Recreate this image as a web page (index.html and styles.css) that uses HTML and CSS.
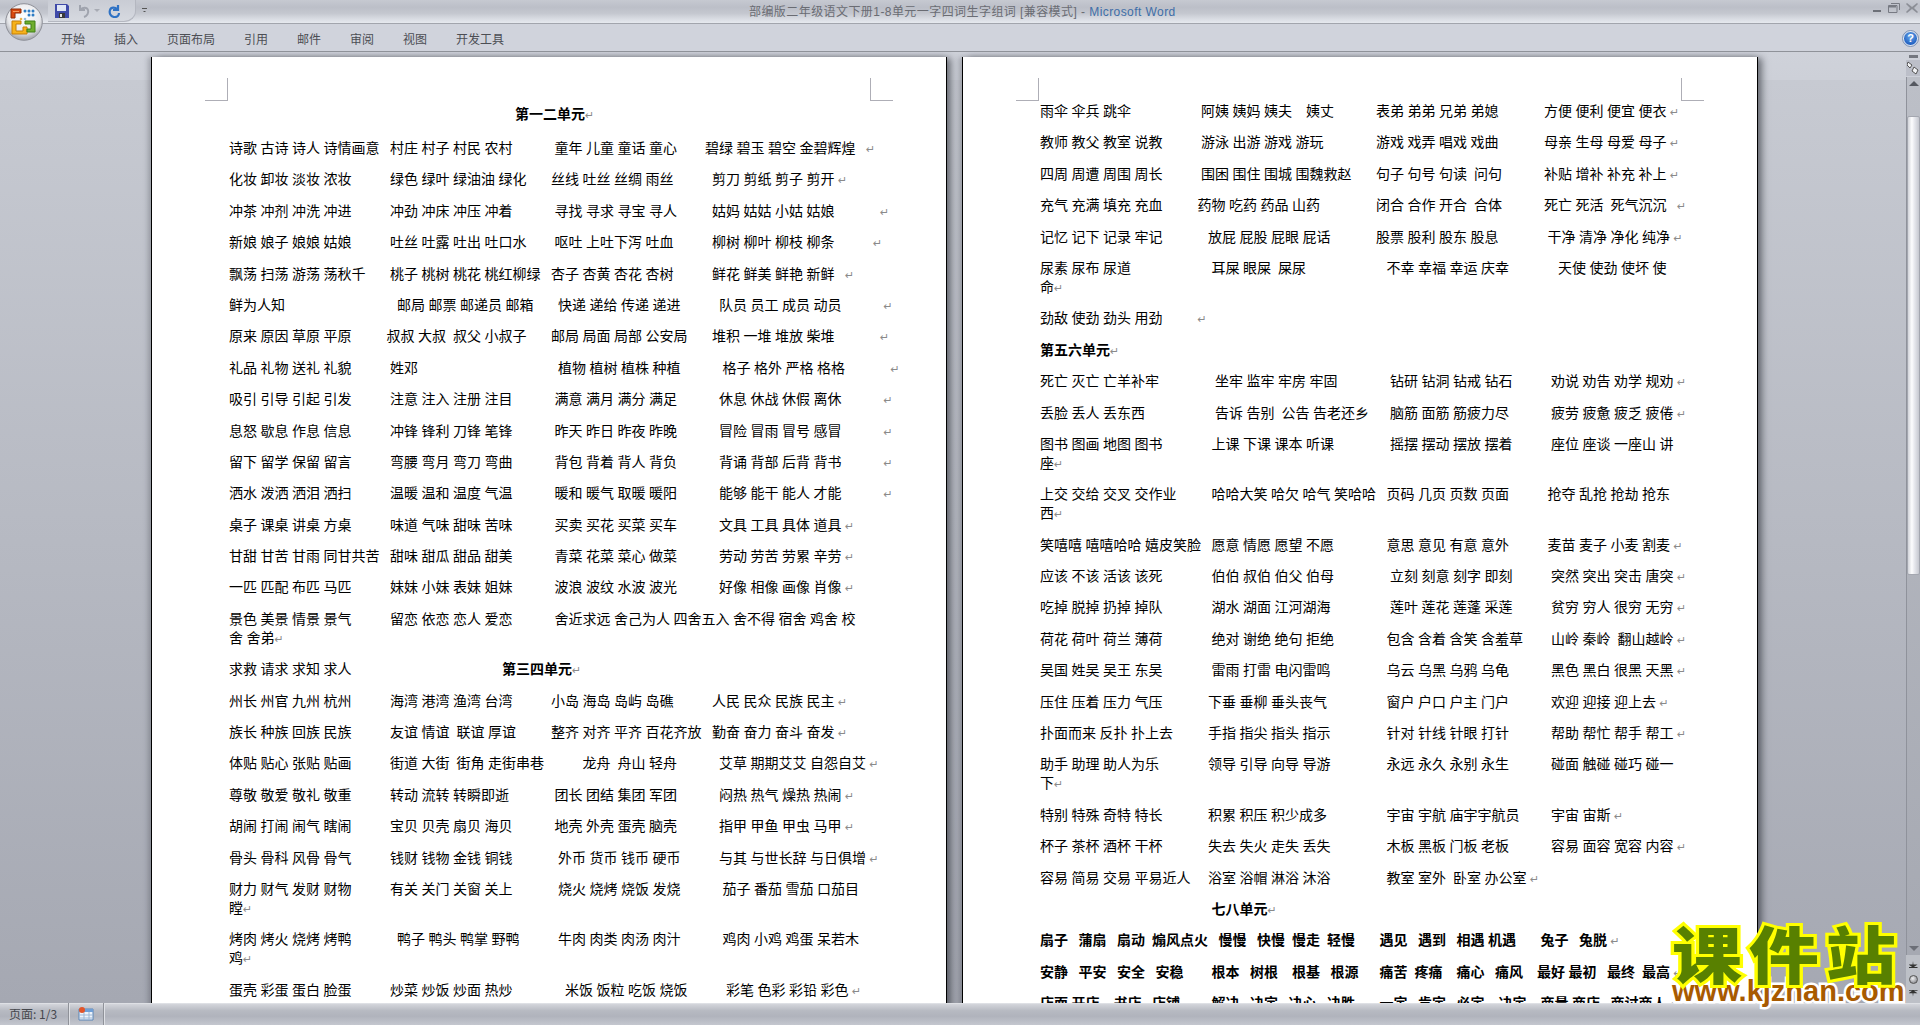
FILE: index.html
```html
<!DOCTYPE html>
<html lang="zh-CN">
<head>
<meta charset="utf-8">
<title>部编版二年级语文下册1-8单元一字四词生字组词 [兼容模式] - Microsoft Word</title>
<link rel="stylesheet" href="styles.css">
</head>
<body>
<div class="window">
  <div class="office-btn">
    <svg viewBox="0 0 38 38" width="38" height="38">
      <defs>
        <radialGradient id="orb" cx="50%" cy="35%" r="62%"><stop offset="0" stop-color="#ffffff"/><stop offset=".7" stop-color="#e8e9ec"/><stop offset="1" stop-color="#a9abb2"/></radialGradient>
      </defs>
      <circle cx="19" cy="19" r="18.3" fill="url(#orb)" stroke="#8e9098" stroke-width="1"/>
      <g transform="translate(-1 -2)">
        <path d="M7 8h10v4h-6v5H7z" fill="#d9480f" stroke="#8f2a05" stroke-width="1"/>
        <path d="M9 10h6v1H9z" fill="#f39a5e"/>
        <circle cx="21" cy="10" r="1.5" fill="#2d7cc4"/><circle cx="25" cy="10" r="1.5" fill="#2d7cc4"/><circle cx="29" cy="10" r="1.5" fill="#2d7cc4"/>
        <circle cx="25" cy="14" r="1.5" fill="#2d7cc4"/><circle cx="29" cy="14" r="1.5" fill="#2d7cc4"/>
        <circle cx="21" cy="18" r="1.3" fill="#8dbbe0"/><circle cx="17" cy="18" r="1.3" fill="#e9b44c"/>
        <path d="M8 20h9v3h-5v7h7v-4h4v7H8z" fill="#f6b21b" stroke="#c57f08" stroke-width="1"/>
        <path d="M21 20h10v11h-8v-3h4v-5h-6z" fill="#6fae2e" stroke="#3f7e14" stroke-width="1"/>
      </g>
    </svg>
  </div>

  <header class="titlebar">
    <div class="qat">
      <svg class="qat-ico" viewBox="0 0 14 14" width="14" height="14"><path d="M0 0h12l2 2v12H0z" fill="#3f4aa8"/><path d="M2 1h9v6H2z" fill="#dfe6f5"/><path d="M4 9h6v5H4z" fill="#3a3a3a"/><path d="M5 10h2v3H5z" fill="#e6e6e6"/></svg>
      <svg class="qat-ico undo" viewBox="0 0 14 14" width="14" height="14"><path d="M3 1v5h5M3.5 5.5C6 3 10 3 11 6s-1 6-4 7" fill="none" stroke="#a0a4ae" stroke-width="2"/></svg>
      <span class="qat-drop"></span>
      <svg class="qat-ico redo" viewBox="0 0 14 14" width="14" height="14"><path d="M11 1v5H6M10.5 5.5C8 3 4 3 3 6s.5 6.5 4 7 5-2 5-4" fill="none" stroke="#2f72c4" stroke-width="2.2"/></svg>
    </div>
    <span class="qat-more"></span>
    <div class="doc-title">部编版二年级语文下册1-8单元一字四词生字组词 [兼容模式] - <span class="app-name">Microsoft Word</span></div>
    <div class="win-ctrls">
      <svg viewBox="0 0 10 10" width="10" height="10"><path d="M1 7h8v2H1z" fill="#6d7078"/></svg>
      <svg viewBox="0 0 12 10" width="12" height="10"><path d="M3 .5h8.5V7M.5 2.5h8.5v7H.5z" fill="none" stroke="#777a83"/><path d="M1 3h7v1.5H1z" fill="#777a83"/></svg>
      <svg viewBox="0 0 12 10" width="12" height="10"><path d="M1 0l5 4 5-4 1 1-4 4 4 4-1 1-5-4-5 4-1-1 4-4-4-4z" fill="#8b8e96"/></svg>
    </div>
  </header>

  <nav class="ribbon">
    <span>开始</span><span>插入</span><span>页面布局</span><span>引用</span><span>邮件</span><span>审阅</span><span>视图</span><span>开发工具</span>
    <span class="help">?</span>
  </nav>

  <main class="workspace">
    <div class="doc">
      <article class="page">
        <i class="crop crop-l"></i><i class="crop crop-r"></i>
        <p class="ln title">第一二单元<span class="pm">↵</span></p>
        <p class="ln">诗歌 古诗 诗人 诗情画意   村庄 村子 村民 农村            童年 儿童 童话 童心        碧绿 碧玉 碧空 金碧辉煌   <span class="pm">↵</span></p>
        <p class="ln">化妆 卸妆 淡妆 浓妆           绿色 绿叶 绿油油 绿化       丝线 吐丝 丝绸 雨丝           剪刀 剪纸 剪子 剪开 <span class="pm">↵</span></p>
        <p class="ln">冲茶 冲剂 冲洗 冲进           冲劲 冲床 冲压 冲着            寻找 寻求 寻宝 寻人          姑妈 姑姑 小姑 姑娘             <span class="pm">↵</span></p>
        <p class="ln">新娘 娘子 娘娘 姑娘           吐丝 吐露 吐出 吐口水        呕吐 上吐下泻 吐血           柳树 柳叶 柳枝 柳条           <span class="pm">↵</span></p>
        <p class="ln">飘荡 扫荡 游荡 荡秋千       桃子 桃树 桃花 桃红柳绿   杏子 杏黄 杏花 杏树           鲜花 鲜美 鲜艳 新鲜   <span class="pm">↵</span></p>
        <p class="ln">鲜为人知                                邮局 邮票 邮递员 邮箱       快递 递给 传递 递进           队员 员工 成员 动员            <span class="pm">↵</span></p>
        <p class="ln">原来 原因 草原 平原          叔叔 大叔  叔父 小叔子       邮局 局面 局部 公安局       堆积 一堆 堆放 柴堆             <span class="pm">↵</span></p>
        <p class="ln">礼品 礼物 送礼 礼貌           姓邓                                        植物 植树 植株 种植            格子 格外 严格 格格             <span class="pm">↵</span></p>
        <p class="ln">吸引 引导 引起 引发           注意 注入 注册 注目            满意 满月 满分 满足            休息 休战 休假 离休            <span class="pm">↵</span></p>
        <p class="ln">息怒 歇息 作息 信息           冲锋 锋利 刀锋 笔锋            昨天 昨日 昨夜 昨晚            冒险 冒雨 冒号 感冒            <span class="pm">↵</span></p>
        <p class="ln">留下 留学 保留 留言           弯腰 弯月 弯刀 弯曲            背包 背着 背人 背负            背诵 背部 后背 背书            <span class="pm">↵</span></p>
        <p class="ln">洒水 泼洒 洒泪 洒扫           温暖 温和 温度 气温            暖和 暖气 取暖 暖阳            能够 能干 能人 才能            <span class="pm">↵</span></p>
        <p class="ln">桌子 课桌 讲桌 方桌           味道 气味 甜味 苦味            买卖 买花 买菜 买车            文具 工具 具体 道具 <span class="pm">↵</span></p>
        <p class="ln">甘甜 甘苦 甘雨 同甘共苦   甜味 甜瓜 甜品 甜美            青菜 花菜 菜心 做菜            劳动 劳苦 劳累 辛劳 <span class="pm">↵</span></p>
        <p class="ln">一匹 匹配 布匹 马匹           妹妹 小妹 表妹 姐妹            波浪 波纹 水波 波光            好像 相像 画像 肖像 <span class="pm">↵</span></p>
        <p class="ln">景色 美景 情景 景气           留恋 依恋 恋人 爱恋            舍近求远 舍己为人 四舍五入 舍不得 宿舍 鸡舍 校<br>舍 舍弟<span class="pm">↵</span></p>
        <p class="ln">求救 请求 求知 求人                                           <b>第三四单元</b><span class="pm">↵</span></p>
        <p class="ln">州长 州官 九州 杭州           海湾 港湾 渔湾 台湾           小岛 海岛 岛屿 岛礁           人民 民众 民族 民主 <span class="pm">↵</span></p>
        <p class="ln">族长 种族 回族 民族           友谊 情谊  联谊 厚谊          整齐 对齐 平齐 百花齐放   勤奋 奋力 奋斗 奋发 <span class="pm">↵</span></p>
        <p class="ln">体贴 贴心 张贴 贴画           街道 大街  街角 走街串巷           龙舟  舟山 轻舟            艾草 期期艾艾 自怨自艾 <span class="pm">↵</span></p>
        <p class="ln">尊敬 敬爱 敬礼 敬重           转动 流转 转瞬即逝             团长 团结 集团 军团            闷热 热气 燥热 热闹 <span class="pm">↵</span></p>
        <p class="ln">胡闹 打闹 闹气 瞎闹           宝贝 贝壳 扇贝 海贝            地壳 外壳 蛋壳 脑壳            指甲 甲鱼 甲虫 马甲 <span class="pm">↵</span></p>
        <p class="ln">骨头 骨科 风骨 骨气           钱财 钱物 金钱 铜钱             外币 货币 钱币 硬币           与其 与世长辞 与日俱增 <span class="pm">↵</span></p>
        <p class="ln">财力 财气 发财 财物           有关 关门 关窗 关上             烧火 烧烤 烧饭 发烧            茄子 番茄 雪茄 口茄目<br>瞠<span class="pm">↵</span></p>
        <p class="ln">烤肉 烤火 烧烤 烤鸭             鸭子 鸭头 鸭掌 野鸭           牛肉 肉类 肉汤 肉汁            鸡肉 小鸡 鸡蛋 呆若木<br>鸡<span class="pm">↵</span></p>
        <p class="ln">蛋壳 彩蛋 蛋白 脸蛋           炒菜 炒饭 炒面 热炒               米饭 饭粒 吃饭 烧饭           彩笔 色彩 彩铅 彩色 <span class="pm">↵</span></p>
      </article>

      <article class="page">
        <i class="crop crop-l"></i><i class="crop crop-r"></i>
        <p class="ln">雨伞 伞兵 跳伞                    阿姨 姨妈 姨夫    姨丈            表弟 弟弟 兄弟 弟媳             方便 便利 便宜 便衣 <span class="pm">↵</span></p>
        <p class="ln">教师 教父 教室 说教           游泳 出游 游戏 游玩               游戏 戏弄 唱戏 戏曲             母亲 生母 母爱 母子 <span class="pm">↵</span></p>
        <p class="ln">四周 周遭 周围 周长           围困 围住 围城 围魏救赵       句子 句号 句读  问句            补贴 增补 补充 补上 <span class="pm">↵</span></p>
        <p class="ln">充气 充满 填充 充血          药物 吃药 药品 山药                闭合 合作 开合  合体            死亡 死活  死气沉沉   <span class="pm">↵</span></p>
        <p class="ln">记忆 记下 记录 牢记             放屁 屁股 屁眼 屁话             股票 股利 股东 股息              干净 清净 净化 纯净 <span class="pm">↵</span></p>
        <p class="ln">尿素 尿布 尿道                       耳屎 眼屎  屎尿                       不幸 幸福 幸运 庆幸              天使 使劲 使坏 使<br>命<span class="pm">↵</span></p>
        <p class="ln">劲敌 使劲 劲头 用劲          <span class="pm">↵</span></p>
        <p class="ln"><b>第五六单元</b><span class="pm">↵</span></p>
        <p class="ln">死亡 灭亡 亡羊补牢                坐牢 监牢 牢房 牢固               钻研 钻洞 钻戒 钻石           劝说 劝告 劝学 规劝 <span class="pm">↵</span></p>
        <p class="ln">丢脸 丢人 丢东西                    告诉 告别  公告 告老还乡      脑筋 面筋 筋疲力尽            疲劳 疲惫 疲乏 疲倦 <span class="pm">↵</span></p>
        <p class="ln">图书 图画 地图 图书              上课 下课 课本 听课                摇摆 摆动 摆放 摆着           座位 座谈 一座山 讲<br>座<span class="pm">↵</span></p>
        <p class="ln">上交 交给 交叉 交作业          哈哈大笑 哈欠 哈气 笑哈哈   页码 几页 页数 页面           抢夺 乱抢 抢劫 抢东<br>西<span class="pm">↵</span></p>
        <p class="ln">笑嘻嘻 嘻嘻哈哈 嬉皮笑脸   愿意 情愿 愿望 不愿               意思 意见 有意 意外           麦苗 麦子 小麦 割麦 <span class="pm">↵</span></p>
        <p class="ln">应该 不该 活该 该死              伯伯 叔伯 伯父 伯母                立刻 刻意 刻字 即刻           突然 突出 突击 唐突 <span class="pm">↵</span></p>
        <p class="ln">吃掉 脱掉 扔掉 掉队              湖水 湖面 江河湖海                 莲叶 莲花 莲蓬 采莲           贫穷 穷人 很穷 无穷 <span class="pm">↵</span></p>
        <p class="ln">荷花 荷叶 荷兰 薄荷              绝对 谢绝 绝句 拒绝               包含 含着 含笑 含羞草        山岭 秦岭  翻山越岭 <span class="pm">↵</span></p>
        <p class="ln">吴国 姓吴 吴王 东吴              雷雨 打雷 电闪雷鸣                乌云 乌黑 乌鸦 乌龟            黑色 黑白 很黑 天黑 <span class="pm">↵</span></p>
        <p class="ln">压住 压着 压力 气压             下垂 垂柳 垂头丧气                 窗户 户口 户主 门户            欢迎 迎接 迎上去 <span class="pm">↵</span></p>
        <p class="ln">扑面而来 反扑 扑上去          手指 指尖 指头 指示                针对 针线 针眼 打针            帮助 帮忙 帮手 帮工 <span class="pm">↵</span></p>
        <p class="ln">助手 助理 助人为乐              领导 引导 向导 导游                永远 永久 永别 永生            碰面 触碰 碰巧 碰一<br>下<span class="pm">↵</span></p>
        <p class="ln">特别 特殊 奇特 特长             积累 积压 积少成多                 宇宙 宇航 庙宇宇航员         宇宙 宙斯 <span class="pm">↵</span></p>
        <p class="ln">杯子 茶杯 酒杯 干杯             失去 失火 走失 丢失                木板 黑板 门板 老板            容易 面容 宽容 内容 <span class="pm">↵</span></p>
        <p class="ln">容易 简易 交易 平易近人     浴室 浴帽 淋浴 沐浴                教室 室外  卧室 办公室 <span class="pm">↵</span></p>
        <p class="ln">                                                 <b>七八单元</b><span class="pm">↵</span></p>
        <p class="ln"><b>扇子   蒲扇   扇动  煽风点火   慢慢   快慢  慢走  轻慢       遇见   遇到   相遇 机遇       兔子   兔脱 </b><span class="pm">↵</span></p>
        <p class="ln"><b>安静   平安   安全   安稳        根本   树根    根基   根源      痛苦  疼痛    痛心   痛风    最好 最初   最终  最高 </b><span class="pm">↵</span></p>
        <p class="ln"><b>店面 开店    书店   店铺         解决   决定   决心   决胜       一定   肯定   必定    决定    商量 商店   商讨商人 </b><span class="pm">↵</span></p>
      </article>
    </div>

    <aside class="vscroll">
      <span class="split"></span>
      <span class="ruler-btn">
        <svg viewBox="0 0 12 14" width="12" height="14"><path d="M1 1l4 3-2 3-3-3zM7 6l4 3-2 4-4-3z" fill="#f2f3f6" stroke="#555" stroke-width="1"/></svg>
      </span>
      <div class="track">
        <span class="arrow-up"></span>
        <span class="thumb"></span>
        <span class="arrow-down"></span>
      </div>
      <div class="navs">
        <span class="nav nav-prev"></span>
        <span class="nav-dot"></span>
        <span class="nav"></span>
      </div>
    </aside>
  </main>

  <footer class="status">
    <span class="st-page">页面: 1/3</span>
    <span class="st-sep"></span>
    <svg class="st-ico" viewBox="0 0 16 14" width="16" height="14"><path d="M1 2h14v11H1z" fill="#eef4fb" stroke="#5b86b8"/><path d="M1 2h14v3H1z" fill="#6f9fd6"/><path d="M1 8h14M1 11h14M6 5v8M11 5v8" stroke="#9db8d6" fill="none"/><circle cx="4" cy="3" r="3" fill="#e2552a"/></svg>
    <span class="st-sep"></span>
  </footer>

  <div class="watermark">
    <div class="wm-cn">课件站</div>
    <div class="wm-en">www.kjzhan.com</div>
  </div>
</div>
</body>
</html>
```

FILE: styles.css
```css
* { box-sizing: border-box; }
html, body { margin: 0; height: 100%; overflow: hidden; }
body { font-family: "Liberation Serif", "Noto Sans CJK SC", sans-serif; }

.window { position: relative; display: flex; flex-direction: column; height: 100vh; background: #ced1d9; }

/* title bar */
.titlebar {
  height: 24px; flex: none; display: flex; align-items: center; position: relative;
  padding-left: 48px;
  background: linear-gradient(#c6c9d1 0, #bcbfc8 30%, #c4c7cf 55%, #d6d9e0 75%, #e6e9ef 96%, #a2a5ad 96%, #a2a5ad 100%);
}
.office-btn { position: absolute; left: 5px; top: 3px; z-index: 3; width: 38px; height: 38px; }
.qat {
  display: flex; align-items: center; height: 22px; width: 88px; margin-top: -2px;
  padding-left: 7px;
  background: linear-gradient(#c9ccd4, #d6d9e0);
  border: 1px solid #b4b7c0; border-top: none; border-left: none;
  border-radius: 0 0 12px 0 / 0 0 11px 0;
}
.qat-ico { flex: none; }
.undo { margin-left: 8px; }
.qat-drop { width: 0; height: 0; margin-left: 3px; border: 3px solid transparent; border-top: 3px solid #a8abb4; border-bottom: none; }
.redo { margin-left: 7px; }
.qat-more { width: 5px; height: 5px; margin-left: 6px; margin-top: -4px; border-top: 1px solid #555; background: linear-gradient(#555, #555) 0 2px/5px 1px no-repeat; clip-path: polygon(0 0, 100% 0, 100% 50%, 50% 100%, 0 50%); }
.doc-title {
  position: absolute; left: 749px; top: 3px;
  font: 12px/18px "Liberation Sans", "Noto Sans CJK SC", sans-serif; color: #6a6c73; white-space: nowrap;
  letter-spacing: .43px;
}
.app-name { color: #3e6ea8; }
.win-ctrls { margin-left: auto; display: flex; align-items: center; gap: 6px; padding-right: 2px; margin-top: -8px; }

/* ribbon tabs */
.ribbon {
  height: 28px; flex: none; display: flex; align-items: center; gap: 29px; padding: 2px 0 0 61px;
  background: #d0d3dc; border-bottom: 1px solid #8f9299;
  font: 12px/1 "Noto Sans CJK SC", sans-serif; color: #4c4e54;
}
.help {
  margin-left: auto; margin-right: 2px; width: 15px; height: 15px; border-radius: 50%;
  background: radial-gradient(circle at 50% 35%, #6aa6ea, #1f5fc0 75%);
  border: 1px solid #e6eefa; outline: 1px solid #7e93b5;
  color: #fff; font: bold 11px/13px "Liberation Sans", sans-serif; text-align: center;
}

/* workspace */
.workspace { flex: 1; min-height: 0; display: flex; overflow: hidden; background: linear-gradient(#cfd2da 0, #cdd0d8 2.9%, #c7cad2 2.9%, #a5a8b2 100%); }
.doc { flex: 1; min-width: 0; display: flex; align-items: flex-start; gap: 15px; padding: 5px 0 0 151px; overflow: hidden; }
.page {
  position: relative; flex: none; width: 796px; min-height: 1100px;
  background: #fff; color: #000;
  border-left: 1px solid #000; border-right: 1px solid #000;
  padding: 45px 40px 0 77px;
  box-shadow: 5px 0 7px -1px rgba(30,32,40,.55), -3px 0 5px rgba(40,42,50,.25);
  font-size: 14px;
}
.crop { position: absolute; top: 21px; width: 23px; height: 23px; border-bottom: 1px solid #aeaeb6; }
.crop-l { left: 53px; border-right: 1px solid #aeaeb6; }
.crop-r { left: 718px; border-left: 1px solid #aeaeb6; }

.ln { margin: 0 0 12.4px; line-height: 19px; white-space: pre; }
.title { margin: 3px 0 15px; text-align: center; font-weight: bold; width: 642px; }
.pm {
  display: inline-block; width: 0; overflow: visible; font: 11px/1 "DejaVu Sans", sans-serif; color: #8a8a8a; font-weight: normal;
}

/* vertical scrollbar */
.vscroll { flex: none; width: 14px; display: flex; flex-direction: column; align-items: center; background: #ced1d9; }
.split { width: 9px; height: 3px; margin-top: 3px; background: #74777f; flex: none; }
.ruler-btn { flex: none; width: 14px; height: 16px; margin-top: 2px; display: flex; align-items: center; justify-content: center; background: #bcbfc9; }
.track {
  flex: 1; width: 14px; margin-top: 1px; min-height: 0; display: flex; flex-direction: column; align-items: center;
  background: linear-gradient(#bcbfc7, #a6a9b2); border-left: 1px solid #8f929b;
}
.arrow-up { flex: none; margin-top: 4px; width: 0; height: 0; border: 5px solid transparent; border-top: none; border-bottom: 5px solid #555860; }
.thumb { flex: none; display: block; width: 13px; margin-top: 30px; height: 459px; background: linear-gradient(90deg, #d2d4da, #fdfdfe 35%, #eaebf0 55%, #c6c8d0 100%); border: 1px solid #a4a7b0; border-radius: 2px; }
.arrow-down { flex: none; margin: auto 0 4px; width: 0; height: 0; border: 5px solid transparent; border-bottom: none; border-top: 5px solid #6c6f77; }
.navs { flex: none; width: 14px; height: 48px; display: flex; flex-direction: column; align-items: center; justify-content: space-evenly; background: #bdc0c7; }
.nav { flex: none; width: 9px; height: 7px; background: #333; clip-path: polygon(0 0, 100% 0, 100% 15%, 60% 15%, 100% 50%, 55% 50%, 50% 100%, 45% 50%, 0 50%, 40% 15%, 0 15%); }
.nav-prev { transform: scaleY(-1); }
.nav-dot { flex: none; width: 9px; height: 9px; border-radius: 50%; background: radial-gradient(circle at 40% 35%, #f0f0f2, #6f7178); border: 1px solid #555; }

/* status bar */
.status {
  height: 22px; flex: none; display: flex; align-items: center;
  background: linear-gradient(#e6e8ec 0, #d2d4da 6%, #b7bac2 35%, #b0b3bc 60%, #c4c7cf 100%);
  font: 12px/1 "Noto Sans CJK SC", sans-serif; color: #45474d;
}
.st-page { width: 68px; padding-left: 9px; white-space: nowrap; }
.st-sep { width: 1px; height: 100%; background: #8f9299; box-shadow: 1px 0 0 #dfe1e6; }
.st-ico { margin: 0 9px; }

/* watermark */
.watermark { position: absolute; left: 1672px; top: 925px; width: 230px; z-index: 5; }
.wm-cn {
  height: 54px; font: 900 62px/54px "Noto Sans CJK SC", sans-serif; color: #588000; letter-spacing: 6px; white-space: nowrap;
  -webkit-text-stroke: 6px #ffff00; paint-order: stroke fill;
  transform: scaleX(1.13); transform-origin: 0 50%;
}
.wm-en {
  height: 24px; font: bold 29px/24px "Liberation Sans", sans-serif; color: #a85a00; white-space: nowrap; text-align: center;
  -webkit-text-stroke: 5px #ffffff; paint-order: stroke fill;
}
```
